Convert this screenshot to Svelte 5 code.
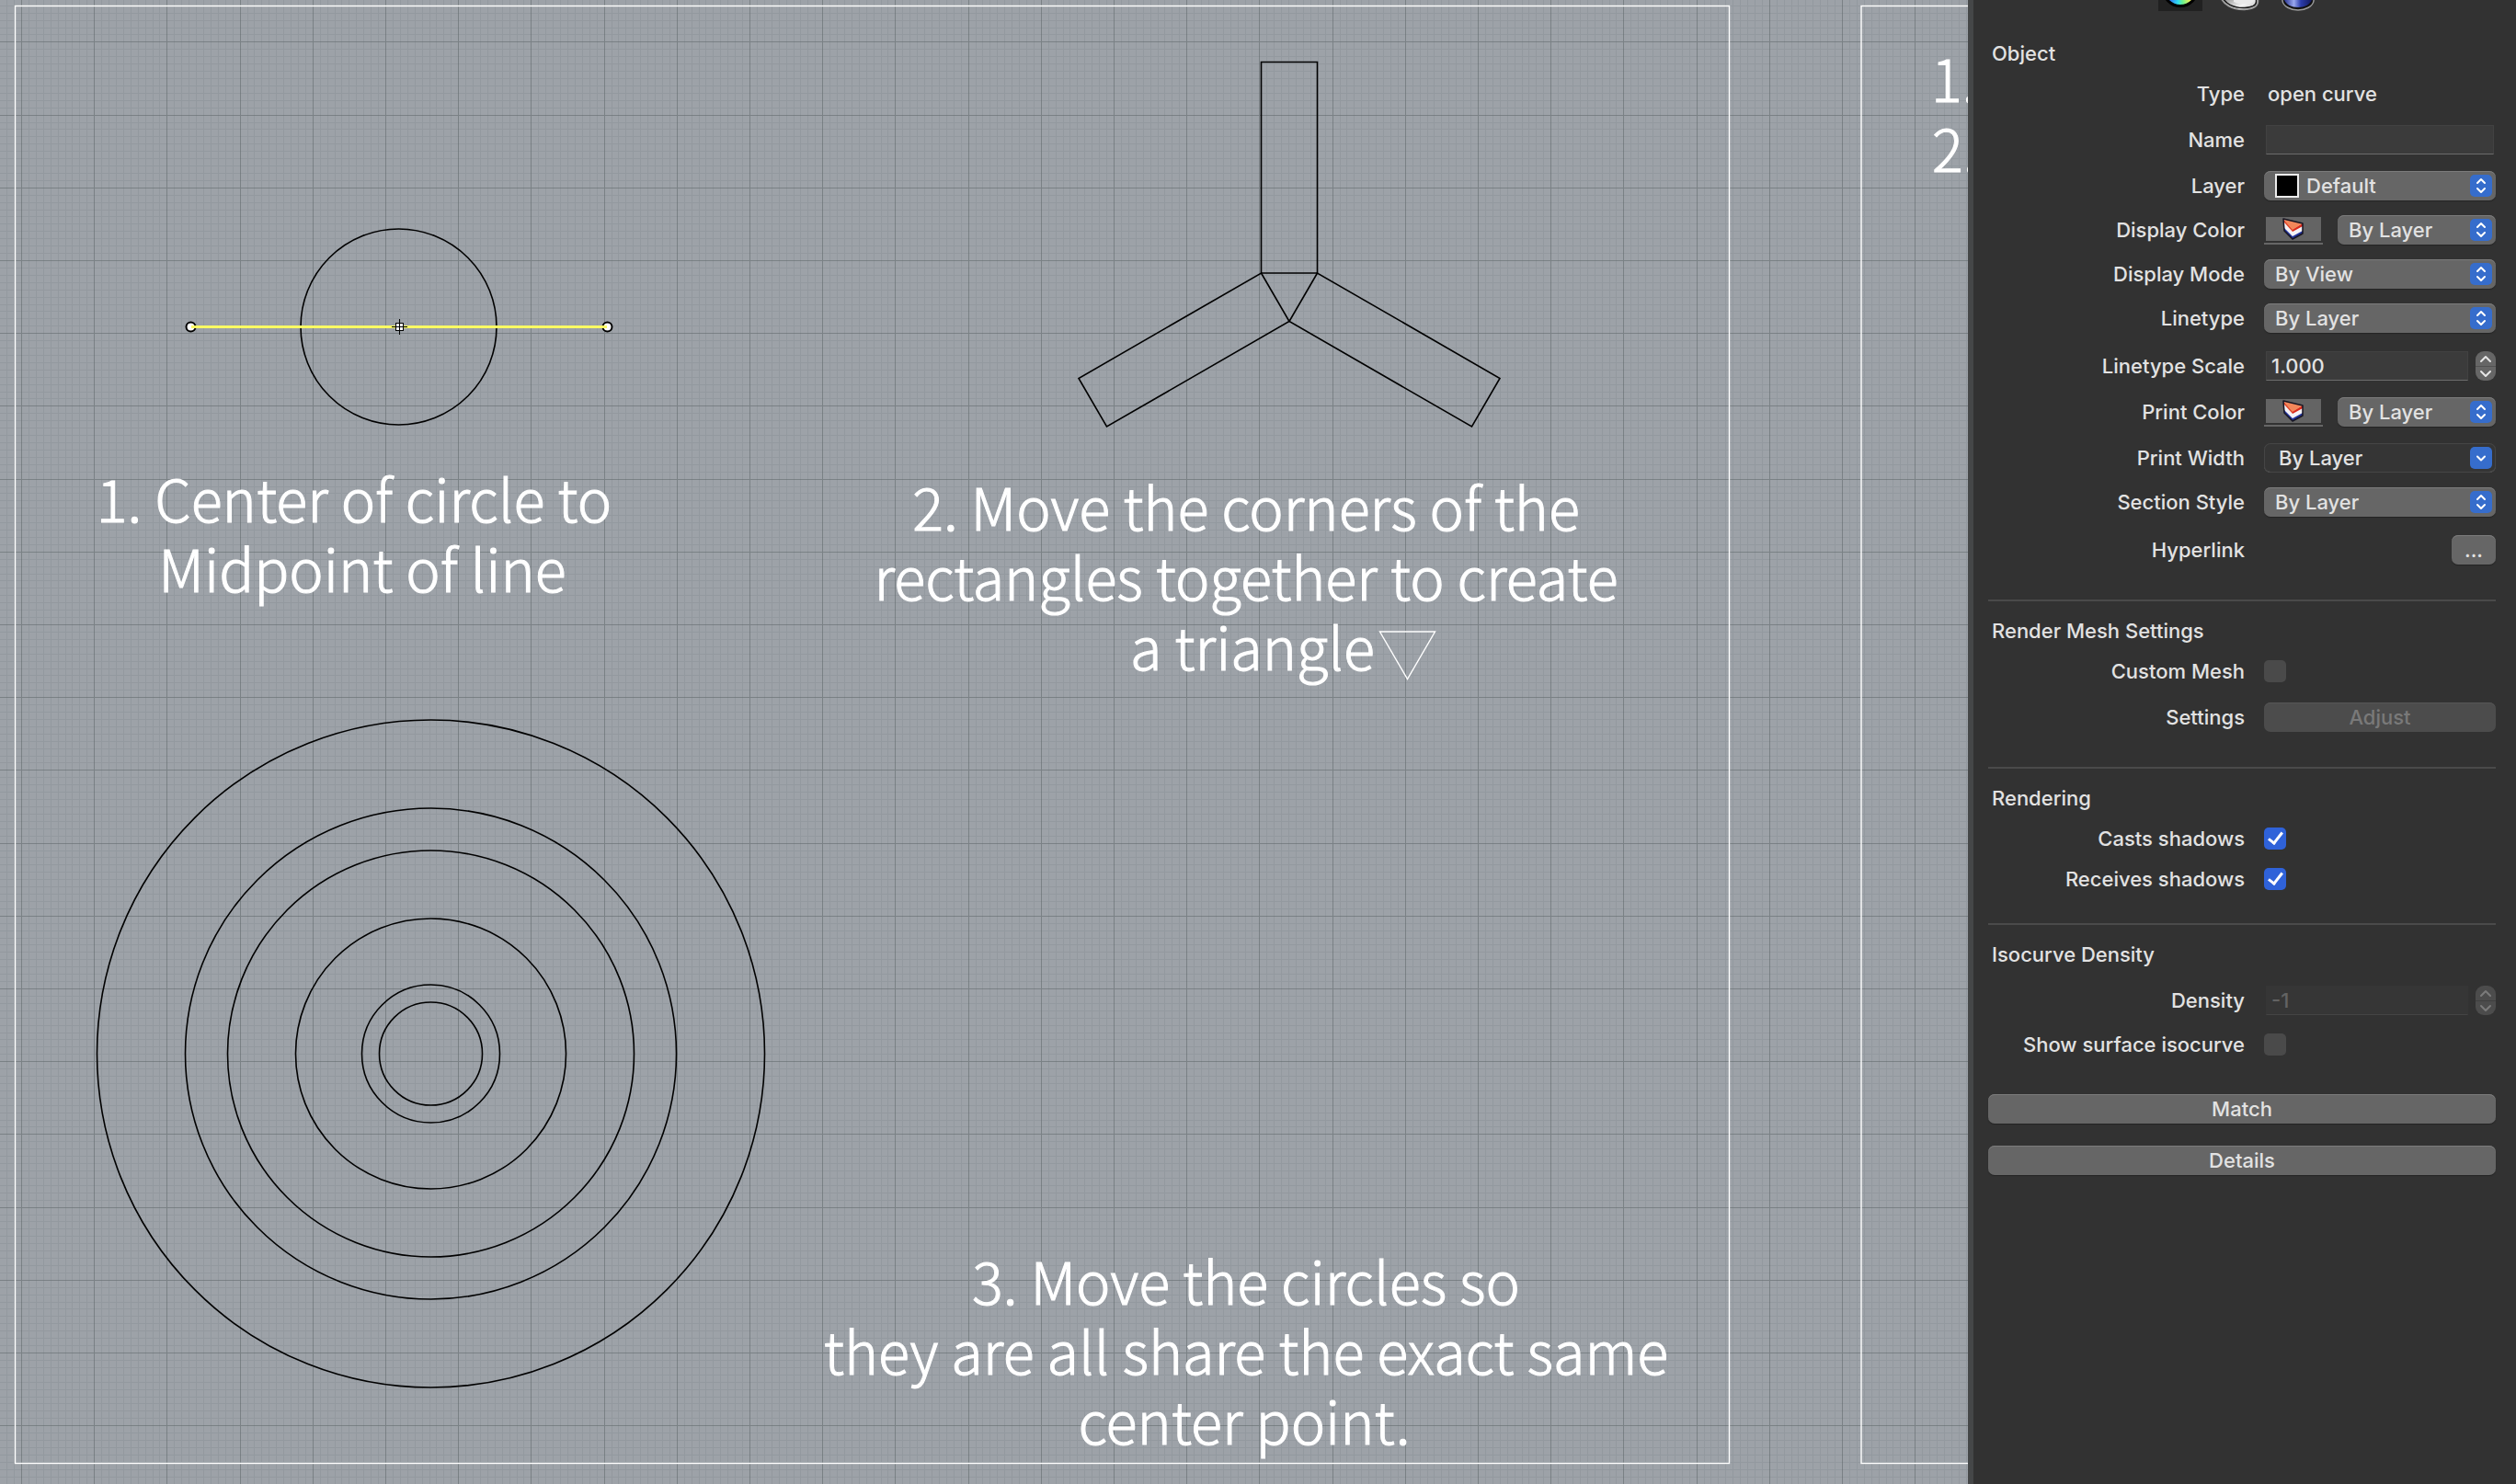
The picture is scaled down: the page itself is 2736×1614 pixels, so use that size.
<script>
  const PITCH = 79.2;

  function gridPath(step, every) {
    let d = '';
    for (let k = -10; k < 500; k++) {
      if (every && k % every === 0) continue;
      const x = Math.round(23 + k * step) + 0.5;
      const y = Math.round(45.4 + k * step) + 0.5;
      d += `M${x} 0V4000M0 ${y}H4000`;
    }
    return d;
  }

  const minorGrid = gridPath(PITCH / 10, 10);
  const majorGrid = gridPath(PITCH, 0);
  const rings = [56, 75, 147, 221, 267, 363];

  const notes = [
    { anchor: 'middle', lines: [[385, 568, '1. Center of circle to'], [394, 644, 'Midpoint of line']] },
    {
      anchor: 'middle',
      lines: [
        [1355, 577, '2. Move the corners of the'],
        [1355, 653, 'rectangles together to create'],
        [1362, 729, 'a triangle'],
      ],
    },
    {
      anchor: 'middle',
      lines: [
        [1355, 1419, '3. Move the circles so'],
        [1355, 1495, 'they are all share the exact same'],
        [1353, 1571, 'center point.'],
      ],
    },
    { anchor: 'start', lines: [[2100, 111, '1.'], [2101, 187, '2.']] },
  ];

  let name = $state('');
  let scale = $state('1.000');
  let density = $state('-1');
  let customMesh = $state(false);
  let casts = $state(true);
  let receives = $state(true);
  let showIso = $state(false);
</script>

{#snippet popup(id, value, kind)}
  <div class="select {kind}">
    {#if kind === 'layer'}<span class="swatch"></span>{/if}
    <select {id}><option>{value}</option></select>
    <svg class="knob" viewBox="0 0 24 24" aria-hidden="true">
      {#if kind === 'combo'}
        <path d="M8 10.500l4 4 4-4" />
      {:else}
        <path d="M8 9l4-4 4 4M8 15l4 4 4-4" />
      {/if}
    </svg>
  </div>
{/snippet}

{#snippet colorWell(label)}
  <button class="well" aria-label={label}>
    <span class="face">
      <svg width="24" height="24" viewBox="0 0 24 24" aria-hidden="true">
        <path d="M1 1L22 6V17L11 23L2 14Z" fill="#f4f2f6" />
        <path d="M2 11L11 20L22 14V17L11 23L2 14Z" fill="#23349b" />
        <path d="M11 12L22 6V9L11 15Z" fill="#d8281c" />
        <path d="M1 1L11 12V15L2 5Z" fill="#e0482c" />
        <path d="M1 1L22 6L11 13Z" fill="#f2875a" />
        <path d="M1 1L22 6V17L11 23L2 14Z" fill="none" stroke="#171522" stroke-width="1.500" stroke-linejoin="round" />
      </svg>
    </span>
  </button>
{/snippet}

{#snippet stepper(label, disabled)}
  <div class="stepper" class:off={disabled}>
    <button {disabled} aria-label="Increase {label}">
      <svg viewBox="0 0 22 16" aria-hidden="true"><path d="M6 11l5-5 5 5" /></svg>
    </button>
    <button {disabled} aria-label="Decrease {label}">
      <svg viewBox="0 0 22 16" aria-hidden="true"><path d="M6 5l5 5 5-5" /></svg>
    </button>
  </div>
{/snippet}

<div class="app">
  <main class="viewport">
    <svg class="canvas" width="100%" height="100%">
      <path class="minor" d={minorGrid} />
      <path class="major" d={majorGrid} />

      <g class="frame">
        <rect x="16.500" y="6.500" width="1864" height="1585" />
        <rect x="2024" y="6.500" width="1864" height="1585" />
        <path d="M1500.500 687H1560.500L1530.500 738.500Z" />
      </g>

      <g class="curve">
        <circle cx="433.500" cy="355.500" r="106.500" />
        {#each rings as r}
          <circle cx="468.500" cy="1146" {r} />
        {/each}
        <path d="M1371.500 67.500H1432.500V297H1371.500Z" />
        <path d="M1371.500 297L1402 349.500L1203.500 464L1173 411.500Z" />
        <path d="M1432.500 297L1402 349.500L1600.500 464L1631 411.500Z" />
      </g>

      <g>
        <circle class="handle" cx="207.500" cy="355.500" r="5" />
        <circle class="handle" cx="660.500" cy="355.500" r="5" />
        <path class="selected" d="M208 355.500H660" />
        <rect class="mark-box" x="430" y="351" width="9" height="9" />
        <path class="mark" d="M426 355.500H443M434.500 347V364M430.500 351.500H438.500V359.500H430.500Z" />
      </g>

      {#each notes as note}
        <text class="note" text-anchor={note.anchor}>
          {#each note.lines as [x, y, line]}<tspan {x} {y}>{line}</tspan>{/each}
        </text>
      {/each}
    </svg>
  </main>

  <aside class="panel">
    <nav class="tabs">
      <button class="tab active" aria-label="Properties"><span class="wheel"></span></button>
      <button class="tab" aria-label="Material">
        <svg viewBox="0 0 48 48" aria-hidden="true">
          <defs>
            <linearGradient id="tube" x1="0" x2="1" y1="0" y2="1">
              <stop offset="0.300" stop-color="#8a8a8a" />
              <stop offset="0.700" stop-color="#f4f4f4" />
              <stop offset="1" stop-color="#b5b5b5" />
            </linearGradient>
          </defs>
          <path d="M3 30C5 41 17 47 30 46.500C39 46 44 43 44.500 38V20H3Z" fill="url(#tube)" stroke="#9b9b9b" stroke-width="1.500" />
          <path d="M5 31C8 40 18 45 30 44.500C38 44 42.500 42 42.500 38V20" fill="none" stroke="#151515" stroke-width="1.500" />
          <path d="M18 38C24 41 34 41 39 38V34H18Z" fill="#e9e9e9" />
        </svg>
      </button>
      <button class="tab" aria-label="Texture mapping">
        <svg viewBox="0 0 48 48" aria-hidden="true">
          <defs>
            <linearGradient id="drum" x1="0" x2="1">
              <stop offset="0" stop-color="#2a3590" />
              <stop offset="0.350" stop-color="#98a6ee" />
              <stop offset="0.600" stop-color="#2b3cab" />
              <stop offset="1" stop-color="#131a5c" />
            </linearGradient>
          </defs>
          <path d="M7 10V37C8 43 16 47 24 47S40 43 41 37V10Z" fill="#111" stroke="#9b9b9b" stroke-width="1.500" />
          <path d="M9 10V36C11 41 17 44 24 44S37 41 39 36V10Z" fill="url(#drum)" />
        </svg>
      </button>
    </nav>

    <section>
      <h2>Object</h2>
      <div class="row g12"><span class="label">Type</span><span class="value">open curve</span></div>
      <div class="row g18">
        <label class="label" for="name">Name</label>
        <div class="control"><input class="field" id="name" type="text" bind:value={name} /></div>
      </div>
      <div class="row g18">
        <label class="label" for="layer">Layer</label>
        <div class="control">{@render popup('layer', 'Default', 'layer')}</div>
      </div>
      <div class="row">
        <label class="label" for="display-color">Display Color</label>
        <div class="control split">
          {@render colorWell('Pick display color')}
          {@render popup('display-color', 'By Layer', '')}
        </div>
      </div>
      <div class="row">
        <label class="label" for="display-mode">Display Mode</label>
        <div class="control">{@render popup('display-mode', 'By View', '')}</div>
      </div>
      <div class="row">
        <label class="label" for="linetype">Linetype</label>
        <div class="control">{@render popup('linetype', 'By Layer', '')}</div>
      </div>
      <div class="row g20">
        <label class="label" for="linetype-scale">Linetype Scale</label>
        <div class="control">
          <input class="field" id="linetype-scale" type="text" bind:value={scale} />
          {@render stepper('linetype scale', false)}
        </div>
      </div>
      <div class="row g18">
        <label class="label" for="print-color">Print Color</label>
        <div class="control split">
          {@render colorWell('Pick print color')}
          {@render popup('print-color', 'By Layer', '')}
        </div>
      </div>
      <div class="row g18">
        <label class="label" for="print-width">Print Width</label>
        <div class="control">{@render popup('print-width', 'By Layer', 'combo')}</div>
      </div>
      <div class="row">
        <label class="label" for="section-style">Section Style</label>
        <div class="control">{@render popup('section-style', 'By Layer', '')}</div>
      </div>
      <div class="row g20">
        <label class="label" for="hyperlink">Hyperlink</label>
        <div class="control end"><button class="push small" id="hyperlink">...</button></div>
      </div>
    </section>

    <section class="ruled">
      <h2>Render Mesh Settings</h2>
      <div class="row g12">
        <label class="label" for="custom-mesh">Custom Mesh</label>
        <input id="custom-mesh" type="checkbox" bind:checked={customMesh} />
      </div>
      <div class="row g18">
        <label class="label" for="adjust">Settings</label>
        <div class="control"><button class="push" id="adjust" disabled>Adjust</button></div>
      </div>
    </section>

    <section class="ruled">
      <h2>Rendering</h2>
      <div class="row g12">
        <label class="label" for="casts">Casts shadows</label>
        <input id="casts" type="checkbox" bind:checked={casts} />
      </div>
      <div class="row g12">
        <label class="label" for="receives">Receives shadows</label>
        <input id="receives" type="checkbox" bind:checked={receives} />
      </div>
    </section>

    <section class="ruled near">
      <h2>Isocurve Density</h2>
      <div class="row g18">
        <label class="label" for="density">Density</label>
        <div class="control">
          <input class="field" id="density" type="text" bind:value={density} disabled />
          {@render stepper('density', true)}
        </div>
      </div>
      <div class="row">
        <label class="label" for="show-iso">Show surface isocurve</label>
        <input id="show-iso" type="checkbox" bind:checked={showIso} />
      </div>
    </section>

    <div class="actions">
      <button class="push">Match</button>
      <button class="push">Details</button>
    </div>
  </aside>
</div>

<style>
  :global(body) {
    background: #323232;
  }

  .app {
    display: flex;
    min-height: 100vh;
    font-family: Inter, 'Liberation Sans', sans-serif;
    font-size: 22px;
    font-weight: 450;
    line-height: 32px;
    color: #e2e2e2;
  }

  .viewport {
    position: relative;
    flex: 1;
    min-width: 0;
    overflow: hidden;
    background: #9da2a8;
  }

  .canvas {
    position: absolute;
    inset: 0;
    display: block;
  }

  .minor,
  .major {
    fill: none;
    shape-rendering: crispEdges;
  }

  .minor {
    stroke: rgba(112, 120, 126, 0.2);
  }

  .major {
    stroke: rgba(98, 106, 110, 0.6);
  }

  .frame {
    fill: none;
    stroke: #fff;
    stroke-width: 1.4px;
  }

  .curve {
    fill: none;
    stroke: #000;
    stroke-width: 1.6px;
  }

  .handle {
    fill: #fff;
    stroke: #000;
    stroke-width: 2px;
  }

  .selected {
    stroke: #fafb62;
    stroke-width: 3px;
  }

  .mark-box {
    fill: #fff;
  }

  .mark {
    fill: none;
    stroke: #000;
    shape-rendering: crispEdges;
  }

  .note {
    font-family: 'Noto Sans CJK JP', 'Noto Sans', sans-serif;
    font-size: 63px;
    font-weight: 300;
    fill: #fff;
    stroke: #fff;
    stroke-width: 1px;
  }

  .panel {
    flex: 0 0 596px;
    box-sizing: border-box;
    overflow: hidden;
    padding: 0 22px 40px 16px;
    border-left: 6px solid #454748;
    background: #323232;
  }

  button,
  input,
  select {
    font: inherit;
    color: inherit;
    margin: 0;
    box-sizing: border-box;
  }

  button {
    padding: 0;
    border: 0;
    background: none;
  }

  .tabs {
    display: flex;
    justify-content: center;
    gap: 16px;
    margin: -36px 0 30px;
    padding-right: 6px;
  }

  .tab {
    display: flex;
    align-items: center;
    justify-content: center;
    width: 48px;
    height: 48px;
  }

  .tab svg {
    width: 48px;
    height: 48px;
  }

  .tab.active {
    background: #212121;
  }

  .wheel {
    width: 40px;
    height: 40px;
    box-sizing: border-box;
    border: 3px solid #000;
    border-radius: 50%;
    background: conic-gradient(from 90deg, #f4a03a, #e8f05c 14%, #6cf08c 22%, #2fdcf0 28%, #2f7cf5 37%, #7a3af0 60%, #f03a8a 80%, #f4a03a);
  }

  h2 {
    margin: 0;
    padding-left: 4px;
    font-size: 22px;
    font-weight: inherit;
    line-height: 32px;
  }

  .ruled {
    margin-top: 38px;
    padding-top: 16px;
    border-top: 2px solid #4a4a4a;
  }

  .ruled.near {
    margin-top: 32px;
  }

  .row {
    display: grid;
    grid-template-columns: 1fr 252px;
    column-gap: 21px;
    align-items: center;
    min-height: 32px;
    margin-top: 16px;
  }

  .g12 {
    margin-top: 12px;
  }

  .g18 {
    margin-top: 18px;
  }

  .g20 {
    margin-top: 20px;
  }

  .label {
    text-align: right;
  }

  .value {
    padding-left: 4px;
  }

  .control {
    display: flex;
    gap: 8px;
  }

  .control.split {
    gap: 16px;
  }

  .control.end {
    justify-content: flex-end;
  }

  .field {
    flex: 1;
    min-width: 0;
    height: 32px;
    margin: 0 2px;
    padding: 0 5px;
    border: 1px solid #424242;
    border-bottom-color: #6c6c6c;
    background: #3b3b3b;
  }

  .field:disabled {
    border-color: #363636;
    border-bottom-color: #444;
    background: #363636;
    color: #636363;
  }

  .select {
    position: relative;
    display: flex;
    flex: 1;
    align-items: center;
    box-sizing: border-box;
    height: 32px;
    border-radius: 7px;
    background: #666;
    box-shadow: inset 0 1px #7c7c7c, 0 1px 1px #242424;
  }

  .select select {
    flex: 1;
    width: 100%;
    height: 32px;
    padding: 0 32px 0 12px;
    border: 0;
    background: none;
    line-height: 30px;
    appearance: none;
  }

  .select.combo {
    background: #353535;
    box-shadow: inset 0 0 0 1px #454545, inset 0 -1px #6c6c6c;
  }

  .select.combo select {
    padding-left: 16px;
  }

  .select.layer select {
    padding-left: 8px;
  }

  .swatch {
    flex: none;
    box-sizing: border-box;
    width: 26px;
    height: 26px;
    margin-left: 12px;
    border: 2px solid #ececec;
    background: #000;
  }

  .knob {
    position: absolute;
    top: 4px;
    right: 4px;
    width: 24px;
    height: 24px;
    border-radius: 5px;
    background: #366dcc;
    fill: none;
    stroke: #fff;
    stroke-width: 2px;
    stroke-linecap: round;
    stroke-linejoin: round;
    pointer-events: none;
  }

  .well {
    flex: 0 0 64px;
    height: 32px;
    padding: 2px 2px 2px;
    border-bottom: 2px solid #666;
  }

  .face {
    display: flex;
    align-items: center;
    justify-content: center;
    height: 26px;
    background: #646464;
  }

  .stepper {
    display: flex;
    flex: 0 0 22px;
    flex-direction: column;
    height: 32px;
    margin-left: -2px;
    overflow: hidden;
    border-radius: 9px;
    background: #666;
  }

  .stepper button {
    height: 16px;
  }

  .stepper button + button {
    border-top: 1px solid #525252;
  }

  .stepper svg {
    display: block;
    width: 22px;
    height: 16px;
    fill: none;
    stroke: #e6e6e6;
    stroke-width: 2px;
    stroke-linecap: round;
    stroke-linejoin: round;
  }

  .stepper.off {
    background: #4c4c4c;
  }

  .stepper.off button + button {
    border-color: #404040;
  }

  .stepper.off svg {
    stroke: #7b7b7b;
  }

  input[type='checkbox'] {
    width: 24px;
    height: 24px;
    border-radius: 5px;
    background: #4a4a4a;
    appearance: none;
  }

  input[type='checkbox']:checked {
    display: grid;
    background: #2f62d9;
  }

  input[type='checkbox']:checked::before {
    content: '';
    width: 6px;
    height: 13px;
    margin: 2px 0 0 8px;
    border: solid #fff;
    border-width: 0 3px 3px 0;
    transform: rotate(38deg);
  }

  .push {
    width: 100%;
    height: 32px;
    border-radius: 7px;
    background: #666;
    box-shadow: inset 0 1px #7c7c7c, 0 1px 1px #242424;
    line-height: 32px;
  }

  .push.small {
    width: 48px;
  }

  .push:disabled {
    background: #4c4c4c;
    box-shadow: inset 0 1px #565656;
    color: #797979;
  }

  .actions {
    display: flex;
    flex-direction: column;
    gap: 24px;
    margin-top: 38px;
  }
</style>
